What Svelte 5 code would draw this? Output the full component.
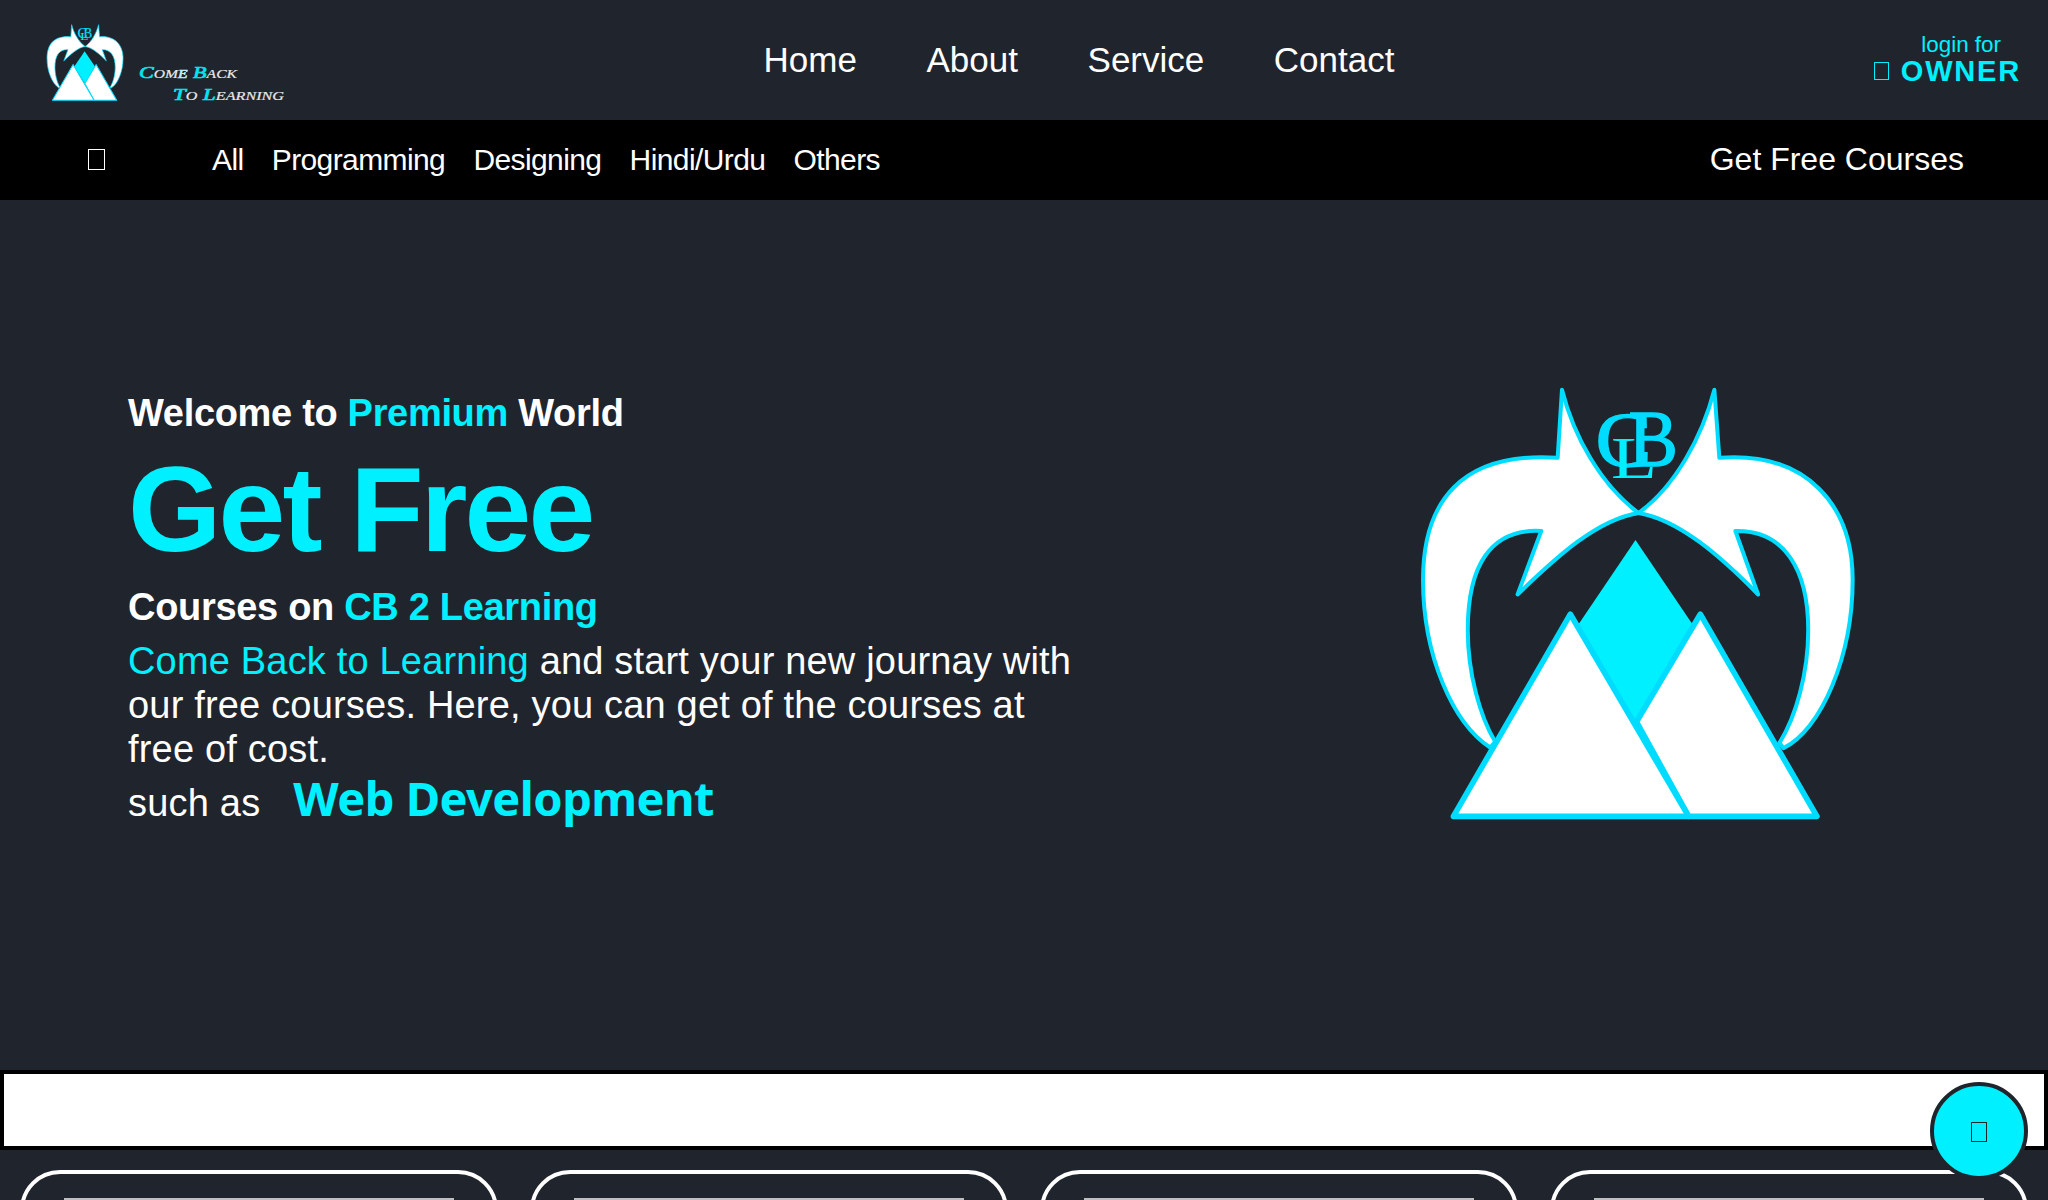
<script>
  const mainLinks = ['Home', 'About', 'Service', 'Contact'];
  const categories = ['All', 'Programming', 'Designing', 'Hindi/Urdu', 'Others'];
  const cards = [1, 2, 3, 4];
</script>

{#snippet emblem()}
  <svg class="emblem" viewBox="120 50 1302 1302" aria-hidden="true">
    <g fill="#fff" stroke="#00dcff" stroke-width="12" stroke-linejoin="round">
      <path d="M545 61C580 200 660 345 774 430C650 450 530 560 412 674L483 484C330 475 263 590 263 780C263 910 300 1040 345 1115L330 1132C220 1060 129 860 129 630C129 400 240 245 532 265Z" />
      <path d="M1001 61C965 200 885 350 774 430C895 450 1020 560 1132 674L1064 484C1210 480 1282 600 1282 780C1282 910 1245 1040 1196 1118L1208 1134C1320 1080 1415 860 1415 630C1415 410 1280 245 1016 265Z" />
    </g>
    <path d="M765 511L940 770L770 1060L590 770Z" fill="#00f0ff" />
    <g fill="#fff" stroke="#00dcff" stroke-width="17" stroke-linejoin="round">
      <path d="M959 733L1308 1338H924L768 1055Z" />
      <path d="M570 733L924 1338H220Z" />
    </g>
    <g class="monogram">
      <text x="645" y="288" font-size="232" textLength="168" lengthAdjust="spacingAndGlyphs" fill="#00dcff" stroke="#00dcff" stroke-width="4">C</text>
      <text x="744" y="290" font-size="238" textLength="148" lengthAdjust="spacingAndGlyphs" fill="#00dcff" stroke="#00dcff" stroke-width="4">B</text>
      <text x="692" y="326" font-size="176" textLength="138" lengthAdjust="spacingAndGlyphs" fill="#00f0ff">L</text>
    </g>
  </svg>
{/snippet}

<header>
  <a class="brand" href="#home">
    <span class="mark">{@render emblem()}</span>
    <svg class="tagline" viewBox="0 0 150 50">
      <text x="0" y="25.5" textLength="98" lengthAdjust="spacingAndGlyphs"><tspan class="hl">C</tspan>om<tspan class="soft">e</tspan> <tspan class="hl">B</tspan>ack</text>
      <text x="34" y="48" textLength="111" lengthAdjust="spacingAndGlyphs"><tspan class="hl">T</tspan>o <tspan class="hl">L</tspan>earning</text>
    </svg>
  </a>
  <nav>
    {#each mainLinks as link}<a href="#{link}">{link}</a>{/each}
  </nav>
  <a class="owner" href="#login">
    <span class="login">login for</span>
    <span class="role"><i class="box"></i><b>OWNER</b></span>
  </a>
</header>

<div class="bar">
  <i class="box search"></i>
  <nav>
    {#each categories as item}<a href="#{item}">{item}</a>{/each}
  </nav>
  <a class="free" href="#courses">Get Free Courses</a>
</div>

<main>
  <section class="hero">
    <div class="copy">
      <h3 class="welcome">Welcome to <span>Premium</span> World</h3>
      <h1>Get Free</h1>
      <h3 class="courses">Courses on <span>CB 2 Learning</span></h3>
      <p class="intro"><span>Come Back to Learning</span> and start your new journay with<br />our free courses. Here, you can get of the courses at<br />free of cost.</p>
      <p class="such">such as <b>Web Development</b></p>
    </div>
    <div class="picture">{@render emblem()}</div>
  </section>
  <div class="strip"></div>
  <section class="cards">
    {#each cards as card (card)}
      <article><div class="thumb"></div></article>
    {/each}
  </section>
</main>

<button class="fab" aria-label="Scroll to top"><i class="box"></i></button>

<style>
  :global(body) {
    background: #20242d;
    overflow: hidden;
    font-family: 'Liberation Sans', Arial, sans-serif;
    color: #fff;
  }
  :global(#app) {
    height: 1200px;
    overflow: hidden;
  }
  a { color: inherit; text-decoration: none; white-space: nowrap; }
  h1, h3, p { margin: 0; }
  .box { display: block; box-sizing: border-box; border: 1px solid currentColor; }
  .emblem { display: block; width: 100%; height: 100%; }
  .monogram { font-family: 'Liberation Serif', serif; }

  header { display: flex; height: 120px; }
  .brand { display: flex; width: 717.5px; padding: 24px 0 0 46px; box-sizing: content-box; }
  .mark { width: 78px; height: 77px; }
  .tagline { width: 150px; height: 50px; margin: 28px 0 0 15px; }
  .tagline text {
    font-family: 'Liberation Serif', serif;
    font-style: italic;
    font-variant: small-caps;
    font-size: 17px;
    fill: #e8e8ea;
    stroke: #e8e8ea;
    stroke-width: 0.2px;
  }
  .tagline .hl { fill: #00e4f2; stroke: #00e4f2; stroke-width: 0.7px; }
  .tagline .soft { fill: #b8f4f6; stroke: #b8f4f6; stroke-width: 0.6px; }
  header nav { display: flex; gap: 69.6px; flex: 1; }
  header nav a { font-size: 35px; line-height: 120px; }
  .owner { display: flex; flex-direction: column; align-items: flex-end; padding: 31px 27px 0 0; color: #00f0ff; }
  .login { font-size: 22.4px; line-height: 27px; margin-right: 20px; }
  .role { display: flex; align-items: center; line-height: 27px; }
  .role .box { width: 15px; height: 18px; margin: 0 12px 1px 0; }
  .role b { font-size: 29px; letter-spacing: 1.8px; }

  .bar { display: flex; align-items: center; height: 80px; background: #000; }
  .search { width: 17px; height: 21px; margin: 0 107px 1px 88px; }
  .bar nav { display: flex; gap: 28.2px; flex: 1; }
  .bar nav a { font-size: 30px; letter-spacing: -0.6px; }
  .free { font-size: 32px; margin: 0 84px 2px 0; }

  .hero { display: flex; height: 870px; }
  .copy { width: 1419.5px; padding: 191px 0 0 128px; box-sizing: border-box; }
  .copy span, .copy b, h1 { color: #00f0ff; }
  h3 { font-size: 38px; line-height: 44px; }
  .welcome { letter-spacing: -0.32px; }
  .courses { letter-spacing: -0.31px; }
  h1 { margin: 14px 0 16px; font-size: 120px; line-height: 120px; letter-spacing: -2.8px; }
  .intro { margin-top: 10px; font-size: 38px; line-height: 44px; letter-spacing: 0.18px; }
  .such { display: flex; align-items: baseline; margin-top: 5px; font-size: 38px; line-height: 44px; letter-spacing: 0.2px; }
  .such b { margin-left: 33px; font-family: 'Noto Sans', sans-serif; font-size: 47px; letter-spacing: -0.55px; }
  .picture { width: 435px; height: 435px; margin-top: 186px; }

  .strip { height: 80px; box-sizing: border-box; border: 4px solid #000; background: #fff; }
  .cards { display: grid; grid-template-columns: repeat(4, 1fr); gap: 32px; padding: 20px; }
  article { height: 500px; box-sizing: border-box; border: 4px solid #fff; border-radius: 40px; padding: 24px 40px; }
  .thumb { height: 260px; background: #bfbfbf; }

  .fab {
    position: fixed;
    right: 20px;
    bottom: 20px;
    display: flex;
    align-items: center;
    justify-content: center;
    width: 98px;
    height: 98px;
    padding: 2px 0 0;
    border: 4px solid #20242d;
    border-radius: 50%;
    background: #00f0ff;
    color: #20242d;
  }
  .fab .box { width: 16px; height: 20px; }
</style>
